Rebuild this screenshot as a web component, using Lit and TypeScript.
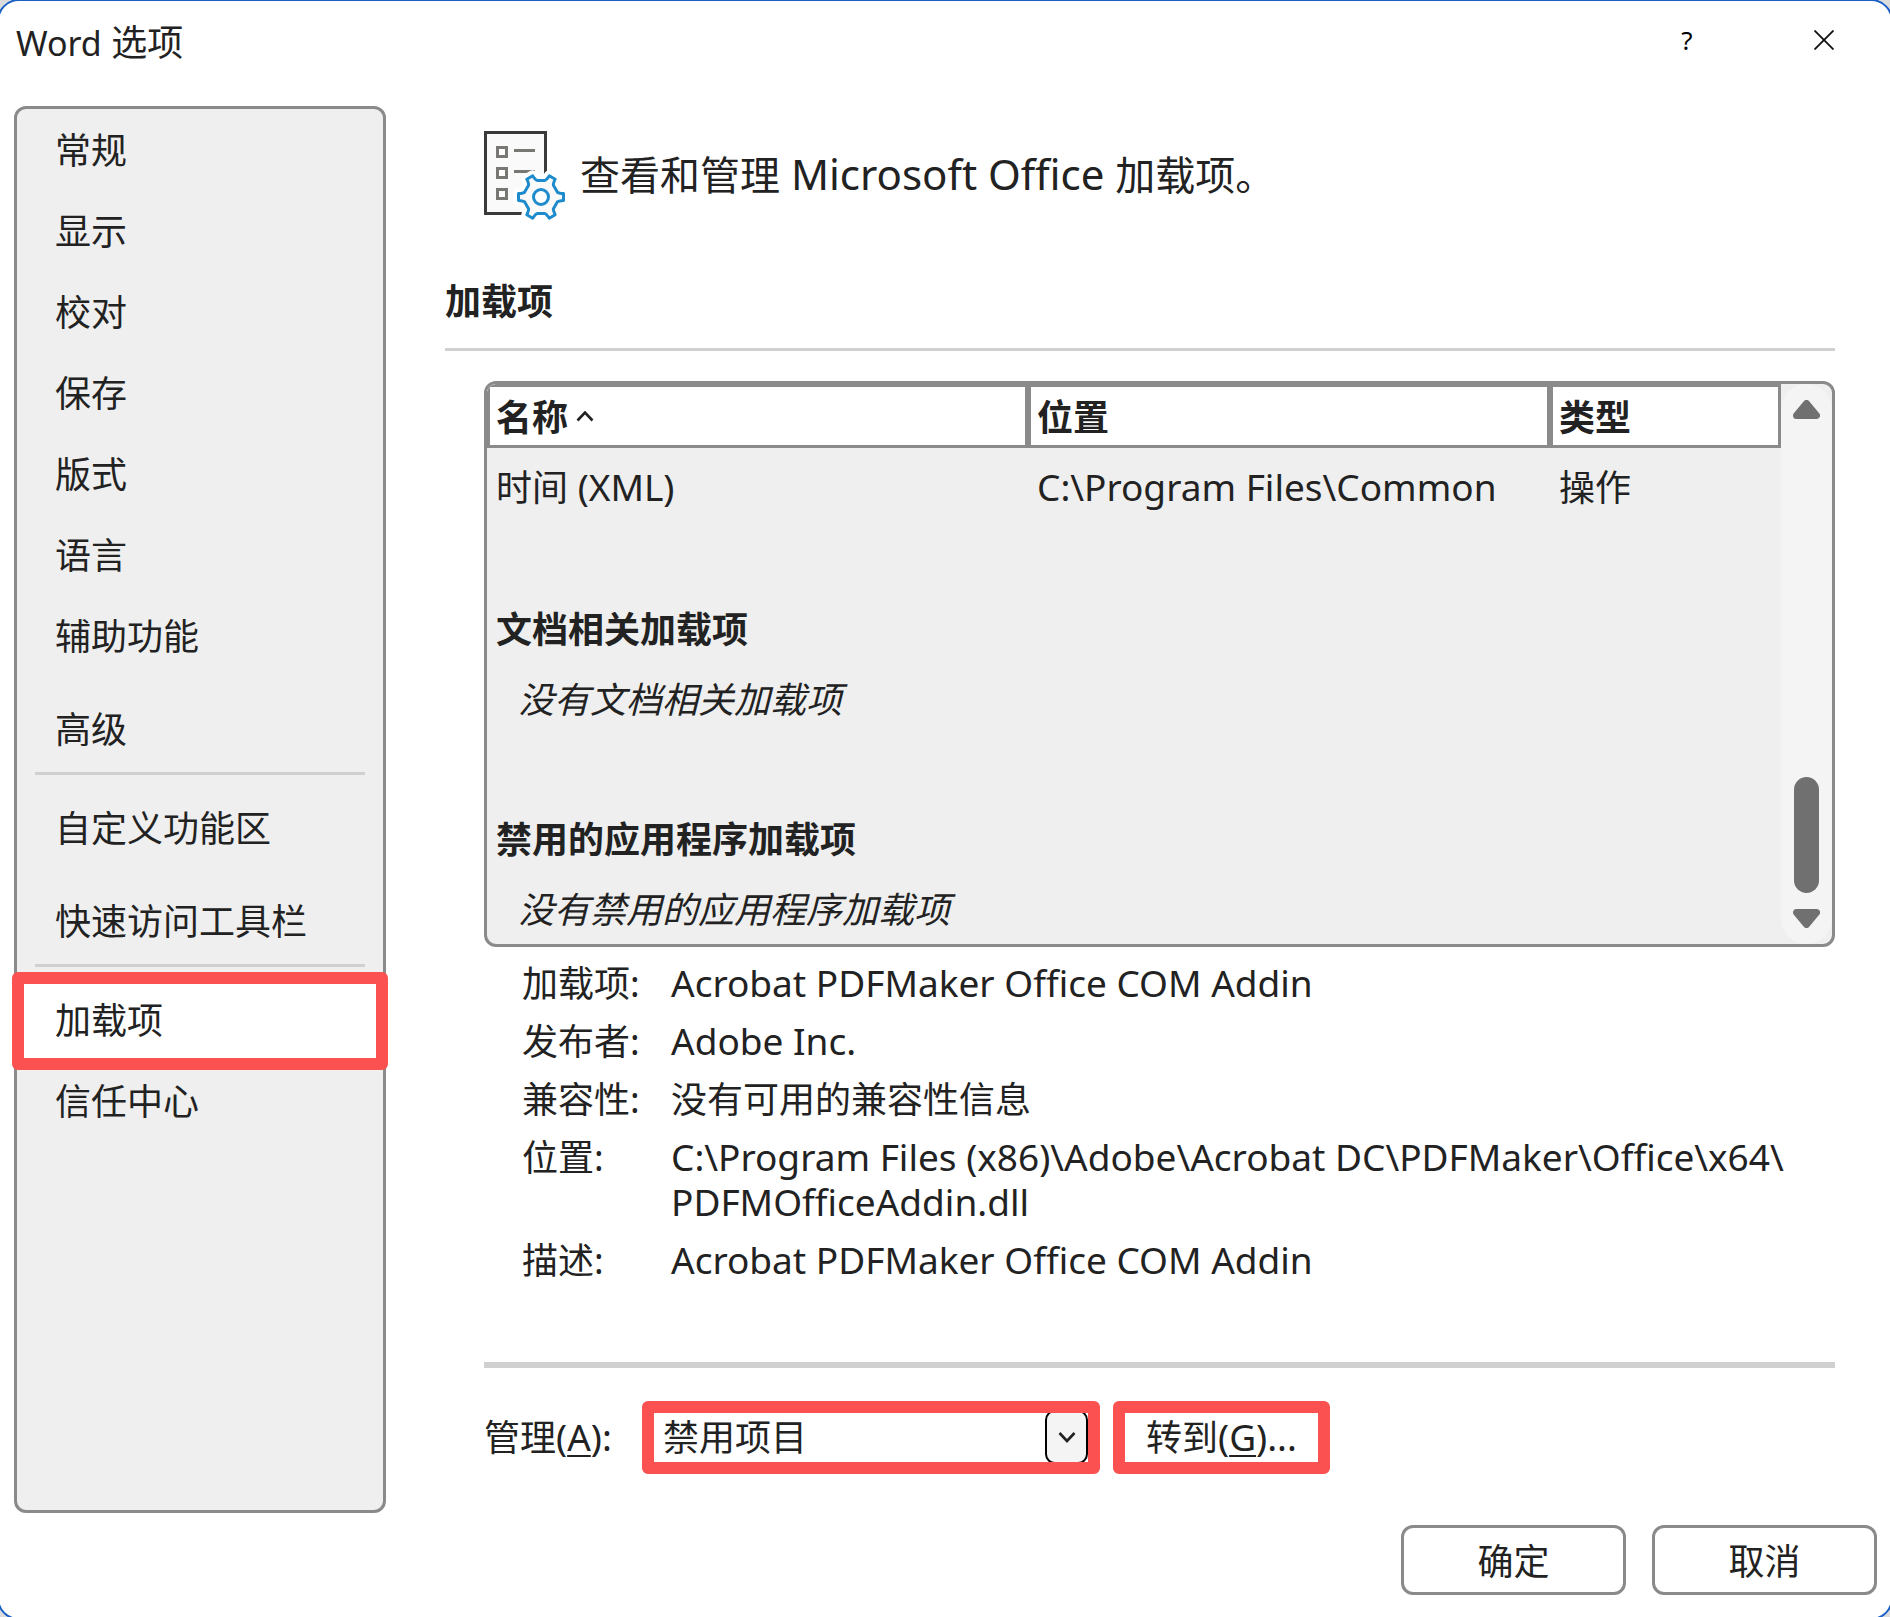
import { LitElement, html, css, svg, nothing } from "lit";
import { customElement, state } from "lit/decorators.js";
import { classMap } from "lit/directives/class-map.js";

interface NavItem {
  label: string;
  spaced?: boolean;
  ruleAfter?: boolean;
}

const NAV: NavItem[] = [
  { label: "常规" },
  { label: "显示" },
  { label: "校对" },
  { label: "保存" },
  { label: "版式" },
  { label: "语言" },
  { label: "辅助功能" },
  { label: "高级", spaced: true, ruleAfter: true },
  { label: "自定义功能区" },
  { label: "快速访问工具栏", spaced: true, ruleAfter: true },
  { label: "加载项" },
  { label: "信任中心" },
];

const DETAILS: Array<[string, string]> = [
  ["加载项:", "Acrobat PDFMaker Office COM Addin"],
  ["发布者:", "Adobe Inc."],
  ["兼容性:", "没有可用的兼容性信息"],
  // The zero-width space lets the path wrap before its file name.
  ["位置:", "C:\\Program Files (x86)\\Adobe\\Acrobat DC\\PDFMaker\\Office\\x64\\\u200bPDFMOfficeAddin.dll"],
  ["描述:", "Acrobat PDFMaker Office COM Addin"],
];

/** Outline of a six-toothed gear centred on (cx, cy). */
function gearPath(cx: number, cy: number): string {
  const turn = (x: number, y: number, deg: number) => {
    const a = (deg * Math.PI) / 180;
    const px = cx + x * Math.cos(a) - y * Math.sin(a);
    const py = cy + x * Math.sin(a) + y * Math.cos(a);
    return `${px.toFixed(2)} ${py.toFixed(2)}`;
  };
  let d = "";
  for (let deg = 0; deg < 360; deg += 60) {
    d += `${deg ? "L" : "M"}${turn(22.5, -3.4, deg)}L${turn(22.5, 3.4, deg)}`;
    d += `Q${turn(17.5, 3.8, deg)} ${turn(16.6, -3.9, deg + 30)}`;
    d += `L${turn(16.6, 3.9, deg + 30)}`;
    d += `Q${turn(17.5, -3.8, deg + 60)} ${turn(22.5, -3.4, deg + 60)}`;
  }
  return d + "Z";
}

const GEAR = gearPath(57, 66);

const addinsIcon = html`
  <svg class="addins-icon" viewBox="0 0 82 90" aria-hidden="true">
    <rect x="1.5" y="1.5" width="60" height="81" fill="#fafafa" stroke="#3b3a39" stroke-width="3" />
    ${[16.5, 37.5, 58.5].map(
      (y) => svg`<rect x="13.5" y=${y} width="9" height="9" fill="#fff" stroke="#797774" stroke-width="3" />`
    )}
    <path d="M30 19.5H51M30 40.5H51" stroke="#797774" stroke-width="3" />
    <path d=${GEAR} fill="#fff" stroke="#fff" stroke-width="11" stroke-linejoin="round" />
    <path d=${GEAR} fill="#fafafa" stroke="#1e8bcd" stroke-width="3" stroke-linejoin="round" />
    <circle cx="57" cy="66" r="7.5" fill="#fff" stroke="#1e8bcd" stroke-width="3" />
  </svg>
`;

@customElement("app-root")
export class AppRoot extends LitElement {
  @state() private selected = "加载项";

  static styles = css`
    :host {
      display: block;
      font-family: "Noto Sans", "Noto Sans CJK SC", sans-serif;
      font-size: 36px;
      line-height: 45px;
      color: #222;
      --line: #8a8a8a;
      --rule: #d0d0d0;
      --panel: #efefef;
      --mark: #fb5151;
    }
    * {
      box-sizing: border-box;
    }
    button,
    select {
      font: inherit;
      color: inherit;
      margin: 0;
    }
    .latin {
      font-size: 37px;
      line-height: 40px;
    }
    .dialog {
      position: relative;
      overflow: hidden;
      display: flex;
      flex-direction: column;
      min-height: 100vh;
      background: #fff;
    }
    .dialog::after {
      content: "";
      position: absolute;
      inset: -1px -3px -3px -3px;
      border: 2px solid #1a5fc4;
      border-radius: 22px;
      box-shadow: 0 0 0 20px #dcdcdc;
      pointer-events: none;
    }
    .titlebar {
      display: flex;
      align-items: flex-start;
      justify-content: space-between;
      height: 106px;
      padding: 20px 16px;
    }
    .title {
      margin: 0;
      font-size: 36px;
      font-weight: 400;
    }
    .title .latin {
      font-size: 34px;
    }
    .caption-buttons {
      display: flex;
      gap: 37px;
    }
    .caption-button {
      display: flex;
      align-items: center;
      justify-content: center;
      width: 100px;
      height: 40px;
      padding: 0;
      border: 0;
      background: none;
      color: #000;
      font-size: 26px;
      line-height: 40px;
    }
    .close-icon {
      width: 20px;
      height: 20px;
    }
    .body {
      flex: 1;
      display: flex;
      align-items: stretch;
      padding-left: 14px;
      padding-right: 55px;
      gap: 59px;
    }
    .sidebar {
      flex: none;
      width: 372px;
      padding-top: 1px;
      border: 3px solid var(--line);
      border-radius: 12px;
      background: var(--panel);
    }
    .nav-list {
      list-style: none;
      margin: 0;
      padding: 0;
    }
    .nav-entry.spaced {
      margin-top: 12px;
    }
    .nav-entry.ruled::after {
      content: "";
      display: block;
      height: 3px;
      margin: 2px 18px 13px;
      background: var(--rule);
    }
    .nav-item {
      display: block;
      position: relative;
      width: 100%;
      height: 81px;
      padding: 0 38px;
      border: 0;
      background: none;
      text-align: left;
    }
    .nav-item.active {
      background: #fff;
    }
    .nav-item.active::after {
      content: "";
      position: absolute;
      inset: -8px -5px -9px;
      border: 12px solid var(--mark);
      border-radius: 6px;
    }
    .main {
      flex: 1;
      min-width: 0;
    }
    .intro {
      display: flex;
      align-items: center;
      gap: 14px;
      padding: 25px 0 0 39px;
    }
    .addins-icon {
      flex: none;
      width: 82px;
      height: 90px;
    }
    .intro-text {
      margin: 0;
      padding-bottom: 4px;
      font-size: 40px;
    }
    .intro-text .latin {
      font-size: 42px;
    }
    .section-title {
      margin: 58px 0 0;
      padding-bottom: 24px;
      border-bottom: 3px solid var(--rule);
      font-size: 36px;
      font-weight: 700;
    }
    .section {
      padding-left: 39px;
    }
    .list {
      display: flex;
      margin-top: 30px;
      border: 3px solid var(--line);
      border-radius: 12px;
      overflow: hidden;
      background: var(--panel);
    }
    .table-area {
      flex: 1;
      min-width: 0;
    }
    .table {
      width: 100%;
      table-layout: fixed;
      border-collapse: separate;
      border-spacing: 0;
    }
    .col-name {
      width: 541px;
    }
    .col-place {
      width: 522px;
    }
    .table th,
    .table td {
      padding: 0 0 0 9px;
      text-align: left;
      white-space: nowrap;
      font-weight: 400;
    }
    .table thead th {
      height: 64px;
      padding-top: 2px;
      padding-left: 6px;
      border: 3px solid var(--line);
      background: #fff;
      font-weight: 700;
    }
    .table .row td,
    .table .row th {
      height: 70px;
    }
    .table .lead td {
      height: 6px;
      line-height: 0;
    }
    .table .item td {
      padding-bottom: 3px;
    }
    .table .group th {
      font-weight: 700;
    }
    .table .empty td {
      padding-left: 31px;
      font-style: italic;
    }
    .sort-button {
      display: inline-flex;
      align-items: center;
      gap: 8px;
      padding: 0;
      border: 0;
      background: none;
      vertical-align: top;
    }
    .sort-icon {
      width: 18px;
      height: 12px;
    }
    .scrollbar {
      flex: none;
      display: flex;
      flex-direction: column;
      align-items: center;
      width: 51px;
      padding: 16px 0;
      border-radius: 26px;
      background: #f4f4f4;
    }
    .scroll-arrow {
      width: 27px;
      height: 19px;
      fill: #707070;
      stroke: #707070;
    }
    .thumb {
      width: 25px;
      height: 116px;
      margin-top: auto;
      margin-bottom: 16px;
      border-radius: 13px;
      background: #707070;
    }
    .details {
      display: grid;
      grid-template-columns: 149px 1fr;
      row-gap: 13px;
      margin: 0;
      padding: 14px 0 79px 38px;
    }
    .details dt,
    .details dd {
      margin: 0;
    }
    .manage {
      display: flex;
      align-items: center;
      padding-top: 33px;
      border-top: 6px solid var(--rule);
    }
    .manage-label {
      width: 158px;
      white-space: nowrap;
    }
    .mark {
      position: relative;
      height: 73px;
      border: 12px solid var(--mark);
      border-radius: 6px;
      background: #fff;
      overflow: hidden;
    }
    .mark-select {
      width: 458px;
    }
    .mark-go {
      width: 217px;
      margin-left: 13px;
    }
    .select {
      display: block;
      appearance: none;
      width: 100%;
      height: 49px;
      padding: 0 60px 0 9px;
      border: 0;
      border-radius: 0;
      background: #fff;
    }
    .drop {
      position: absolute;
      top: -3px;
      right: 0;
      display: flex;
      align-items: center;
      justify-content: center;
      width: 43px;
      height: 54px;
      border: 2px solid #000;
      border-radius: 10px;
      background: #f4f4f4;
      pointer-events: none;
    }
    .drop-icon {
      width: 18px;
      height: 12px;
    }
    .go {
      display: block;
      width: 100%;
      height: 49px;
      padding: 0;
      border: 0;
      background: #fff;
      white-space: nowrap;
    }
    .key {
      text-decoration: underline;
      text-decoration-thickness: 2px;
      text-underline-offset: 4px;
    }
    .footer {
      display: flex;
      justify-content: flex-end;
      gap: 26px;
      padding: 12px 13px 22px;
    }
    .button {
      width: 225px;
      height: 70px;
      padding: 2px 0 0;
      border: 3px solid var(--line);
      border-radius: 12px;
      background: #fff;
    }
  `;

  private renderNav() {
    return NAV.map(
      (item) => html`
        <li class=${classMap({ "nav-entry": true, spaced: !!item.spaced, ruled: !!item.ruleAfter })}>
          <button
            type="button"
            class=${classMap({ "nav-item": true, active: item.label === this.selected })}
            aria-current=${item.label === this.selected ? "page" : nothing}
            @click=${() => (this.selected = item.label)}
          >${item.label}</button>
        </li>
      `
    );
  }

  private renderTable() {
    return html`
      <table class="table">
        <colgroup>
          <col class="col-name" />
          <col class="col-place" />
          <col />
        </colgroup>
        <thead>
          <tr>
            <th scope="col" aria-sort="ascending">
              <button type="button" class="sort-button">
                名称
                <svg class="sort-icon" viewBox="0 0 18 12" aria-hidden="true">
                  <path d="M1.5 9.5L9 1.5L16.5 9.5" fill="none" stroke="#222" stroke-width="2.6" />
                </svg>
              </button>
            </th>
            <th scope="col">位置</th>
            <th scope="col">类型</th>
          </tr>
        </thead>
        <tbody>
          <tr class="lead"><td colspan="3"></td></tr>
          <tr class="row item">
            <td>时间<span class="latin"> (XML)</span></td>
            <td><span class="latin">C:\\Program Files\\Common</span></td>
            <td>操作</td>
          </tr>
          <tr class="row"><td colspan="3"></td></tr>
          <tr class="row group"><th scope="rowgroup" colspan="3">文档相关加载项</th></tr>
          <tr class="row empty"><td colspan="3">没有文档相关加载项</td></tr>
          <tr class="row"><td colspan="3"></td></tr>
          <tr class="row group"><th scope="rowgroup" colspan="3">禁用的应用程序加载项</th></tr>
          <tr class="row empty"><td colspan="3">没有禁用的应用程序加载项</td></tr>
        </tbody>
      </table>
    `;
  }

  private renderDetails() {
    return DETAILS.map(
      ([label, value]) => html`
        <dt>${label}</dt>
        <dd><span class=${classMap({ latin: /^[A-Z]/.test(value) })}>${value}</span></dd>
      `
    );
  }

  render() {
    return html`
      <div class="dialog" role="dialog" aria-labelledby="title">
        <header class="titlebar">
          <h1 class="title" id="title"><span class="latin">Word</span> 选项</h1>
          <div class="caption-buttons">
            <button type="button" class="caption-button">?</button>
            <button type="button" class="caption-button" aria-label="关闭">
              <svg class="close-icon" viewBox="0 0 20 20" aria-hidden="true">
                <path d="M0.5 0.5L19.5 19.5M19.5 0.5L0.5 19.5" stroke="#111" stroke-width="1.8" />
              </svg>
            </button>
          </div>
        </header>

        <div class="body">
          <nav class="sidebar"><ul class="nav-list">${this.renderNav()}</ul></nav>
          <main class="main">
            <div class="intro">
              ${addinsIcon}
              <p class="intro-text">查看和管理<span class="latin"> Microsoft Office </span>加载项。</p>
            </div>
            <h2 class="section-title">加载项</h2>
            <div class="section">
              <div class="list">
                <div class="table-area">${this.renderTable()}</div>
                <div class="scrollbar" aria-hidden="true">
                  <svg class="scroll-arrow" viewBox="0 0 27 19">
                    <path d="M13.5 3.5L23.5 15.5H3.5Z" stroke-width="7" stroke-linejoin="round" />
                  </svg>
                  <div class="thumb"></div>
                  <svg class="scroll-arrow" viewBox="0 0 27 19">
                    <path d="M13.5 15.5L23.5 3.5H3.5Z" stroke-width="7" stroke-linejoin="round" />
                  </svg>
                </div>
              </div>
              <dl class="details">${this.renderDetails()}</dl>
              <div class="manage">
                <label class="manage-label" for="manage">管理<span class="latin">(<span class="key">A</span>):</span></label>
                <div class="mark mark-select">
                  <select class="select" id="manage">
                    <option>禁用项目</option>
                  </select>
                  <span class="drop">
                    <svg class="drop-icon" viewBox="0 0 18 12" aria-hidden="true">
                      <path d="M1.5 2L9 10L16.5 2" fill="none" stroke="#222" stroke-width="2.6" />
                    </svg>
                  </span>
                </div>
                <div class="mark mark-go">
                  <button type="button" class="go">转到<span class="latin">(<span class="key">G</span>)...</span></button>
                </div>
              </div>
            </div>
          </main>
        </div>

        <footer class="footer">
          <button type="button" class="button">确定</button>
          <button type="button" class="button">取消</button>
        </footer>
      </div>
    `;
  }
}
